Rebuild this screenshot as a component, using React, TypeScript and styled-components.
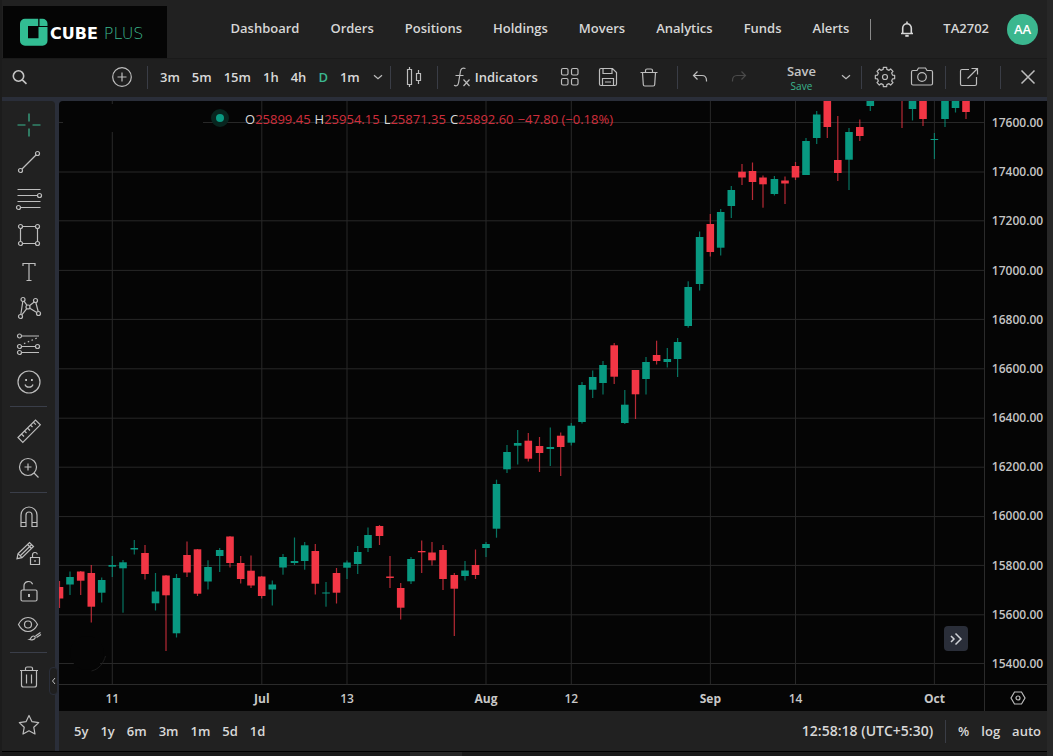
import React from "react";
import styled, { createGlobalStyle } from "styled-components";

const GlobalStyle = createGlobalStyle`
  *, *::before, *::after { box-sizing: border-box; }
  body {
    margin: 0;
    background: #1b1b1b;
    color: #d8d8d8;
    font-family: "Open Sans", "Noto Sans", sans-serif;
    font-size: 13px;
  }
  button { font: inherit; color: inherit; background: none; border: 0; padding: 0; margin: 0; cursor: pointer; }
  a { color: inherit; text-decoration: none; }
`;

const GREEN = "#089981";
const RED = "#f23645";
const ACCENT = "#3bb78f";
const SLATE = "#2a2e39";
const PANEL = "#212121";
const BLACK = "#050505";

const Page = styled.div`
  display: flex;
  flex-direction: column;
  min-height: 100vh;
  border-left: 2px solid #1c1c1c;
  border-right: 6px solid #272727;
`;

/* ---------- header ---------- */

const Header = styled.header`
  display: flex;
  align-items: center;
  height: 59px;
  padding: 0 9px 0 1px;
  background: ${PANEL};
  border-bottom: 1px solid #1a1a1a;
`;

const Logo = styled.a`
  display: flex;
  align-items: center;
  align-self: flex-end;
  gap: 2px;
  width: 164px;
  height: 52px;
  padding-left: 17px;
  background: ${BLACK};
`;

const Wordmark = styled.span`
  display: flex;
  gap: 6px;
  padding-top: 3px;
  color: #ffffff;
  font: 700 16px/20px "DejaVu Sans", sans-serif;
`;

const WordmarkLight = styled.span`
  color: ${ACCENT};
  font-weight: 200;
`;

const Nav = styled.nav`
  display: flex;
  gap: 31px;
  margin-left: auto;
  margin-right: 21px;
`;

const NavLink = styled.a`
  font-weight: 600;
  font-size: 13px;
  line-height: 18px;
  padding-bottom: 2px;
  color: #d6d6d6;
`;

const HeaderRule = styled.span`
  width: 1px;
  height: 21px;
  background: #8a8a8a;
`;

const BellButton = styled.button`
  display: flex;
  margin: 0 27px 0 27px;
`;

const Avatar = styled.button`
  width: 31px;
  height: 31px;
  margin-left: 18px;
  border-radius: 50%;
  background: ${ACCENT};
  color: #ffffff;
  font-weight: 600;
  line-height: 31px;
`;

/* ---------- chart toolbar ---------- */

const Toolbar = styled.div`
  display: flex;
  align-items: center;
  height: 38px;
  padding: 0 5px 2px 0;
  color: #c4c4c4;
  background: #1f1f1f;
`;

const SearchButton = styled.button`
  display: flex;
  width: 106px;
  padding-left: 9px;
`;

const IconButton = styled.button<{ $width?: number; $left?: number; $dim?: boolean }>`
  display: flex;
  justify-content: center;
  align-items: center;
  flex: none;
  width: ${(p) => p.$width ?? 28}px;
  height: 28px;
  margin-left: ${(p) => p.$left ?? 0}px;
  color: ${(p) => (p.$dim ? "#4a4a4a" : "#bdbdbd")};
`;

const Divider = styled.span<{ $before?: number; $after?: number }>`
  flex: none;
  width: 1px;
  height: 23px;
  margin: 0 ${(p) => p.$after ?? 9}px 0 ${(p) => p.$before ?? 9}px;
  background: #3a3d46;
`;

const TextGroup = styled.div`
  display: flex;
  align-items: center;
  gap: 12px;
`;

const TextButton = styled.button<{ $active?: boolean; $large?: boolean }>`
  font-weight: 600;
  font-size: ${(p) => (p.$large ? 14 : 13)}px;
  line-height: 20px;
  color: ${(p) => (p.$active ? ACCENT : "#d8d8d8")};
`;

const SaveButton = styled.button`
  display: flex;
  flex-direction: column;
  align-items: center;
  margin-left: auto;
  margin-right: 24px;
  font-weight: 600;
  line-height: 18px;
`;

const SaveHint = styled.small`
  color: ${ACCENT};
  font-size: 10px;
  font-weight: 400;
  line-height: 12px;
`;

/* ---------- workspace ---------- */

const Workspace = styled.main`
  display: flex;
  flex: 1;
  gap: 4px;
  padding-top: 4px;
  background: ${SLATE};
`;

const Sidebar = styled.aside`
  position: relative;
  display: flex;
  flex-direction: column;
  align-items: center;
  width: 53px;
  padding: 6px 0 8px;
  color: #bdbdbd;
  background: ${PANEL};
  border-top-right-radius: 4px;
`;

const ToolGroup = styled.div<{ $height: number }>`
  display: grid;
  grid-auto-rows: 1fr;
  height: ${(p) => p.$height}px;
`;

const ToolButton = styled.button<{ $active?: boolean }>`
  display: flex;
  align-items: center;
  justify-content: center;
  width: 36px;
  min-height: 36px;
  color: ${(p) => (p.$active ? ACCENT : "inherit")};
`;

const ToolRule = styled.hr`
  width: 37px;
  height: 1px;
  margin: 6px 0;
  border: 0;
  background: #3a3e49;
`;

const Favorites = styled.div`
  margin-top: auto;
`;

const CollapseHandle = styled.button`
  position: absolute;
  right: -3px;
  bottom: 56px;
  display: flex;
  align-items: center;
  justify-content: center;
  width: 9px;
  height: 28px;
  background: #1f1f1f;
  border: 1px solid ${SLATE};
  border-radius: 4px;
`;

const ChartColumn = styled.section`
  display: flex;
  flex-direction: column;
  flex: 1;
  min-width: 0;
`;

const ChartGrid = styled.div`
  display: grid;
  grid-template-columns: minmax(0, 1fr) 63px;
  grid-template-rows: minmax(583px, 1fr) 27px;
  flex: 1;
  background: ${BLACK};
  border-top-left-radius: 4px;
`;

const Plot = styled.div`
  position: relative;
`;

const PlotSvg = styled.svg`
  display: block;
  width: 100%;
  height: 100%;
`;

const Legend = styled.div`
  position: absolute;
  top: 6px;
  left: 152px;
  display: flex;
  align-items: center;
  gap: 4px;
  color: ${RED};
  font-size: 13px;
  line-height: 24px;
`;

const LegendLabel = styled.span`
  color: #d8d8d8;
`;

const LegendValue = styled.span`
  opacity: 0.85;
`;

const StatusDot = styled.span`
  width: 18px;
  height: 18px;
  margin: 0 12px 3px 0;
  border: 5px solid #08251f;
  border-radius: 50%;
  background: #0a9a82;
`;

const ScrollButton = styled.button`
  position: absolute;
  right: 16px;
  bottom: 33px;
  display: flex;
  align-items: center;
  justify-content: center;
  width: 24px;
  height: 25px;
  color: #cfd1d6;
  background: ${SLATE};
  border-radius: 4px;
`;

const PriceAxis = styled.div`
  display: flex;
  flex-direction: column;
  justify-content: space-between;
  align-items: center;
  padding: 14px 0 12px 3px;
  border-left: 1px solid #2b2b2b;
  color: #c4c4c4;
  font-size: 12px;
  font-weight: 600;
  line-height: 16px;
`;

const TimeAxis = styled.div`
  border-top: 1px solid #2b2b2b;
`;

const TimeSvg = styled.svg`
  display: block;
  width: 100%;
  height: 26px;
  fill: #c8c8c8;
  font-size: 12px;
`;

const TimeLabel = styled.text<{ $major: boolean }>`
  font-weight: ${(p) => (p.$major ? 700 : 600)};
`;

const AxisSettings = styled.button`
  display: flex;
  align-items: center;
  justify-content: center;
  padding-left: 4px;
  border-top: 1px solid #2b2b2b;
  border-left: 1px solid #2b2b2b;
  color: #bdbdbd;
`;

const Footer = styled.footer`
  display: flex;
  align-items: center;
  justify-content: space-between;
  height: 40px;
  padding: 0 6px 0 15px;
  background: ${PANEL};
`;

const BottomEdge = styled.div`
  height: 5px;
  border-top: 1px solid #000000;
  background: linear-gradient(90deg, #1a1a1a 39%, #262626 39%, #262626 44%, #1a1a1a 44%);
`;

/* ---------- icons ---------- */

type IconProps = { children: React.ReactNode; size?: number; box?: number; weight?: number };

function Icon({ children, size = 28, box = 28, weight = 1.2 }: IconProps) {
  return (
    <svg
      width={size}
      height={size}
      viewBox={`0 0 ${box} ${box}`}
      fill="none"
      stroke="currentColor"
      strokeWidth={weight}
      aria-hidden="true"
    >
      {children}
    </svg>
  );
}

const Chevron = () => (
  <Icon size={12} box={12}><path d="M2 4.2l4 3.6 4-3.6" /></Icon>
);

const icons = {
  cross: <path d="M14 2.5v8M14 17.5v8M2.5 14h8M17.5 14h8" />,
  trend: <><circle cx="5.5" cy="22.5" r="2" /><circle cx="22.5" cy="5.5" r="2" /><path d="M7 21L21 7" /></>,
  fib: <><path d="M2.5 4.5h23M2.5 10.5h20M2.5 16.5h23M5.5 22.5h20" /><circle cx="24.5" cy="10.5" r="2" /><circle cx="3.5" cy="22.5" r="2" /></>,
  rect: (
    <><circle cx="5.5" cy="5.5" r="2" /><circle cx="22.5" cy="5.5" r="2" /><circle cx="5.5" cy="22.5" r="2" /><circle cx="22.5" cy="22.5" r="2" />
      <path d="M7.5 5.5h13M7.5 22.5h13M5.5 7.5v13M22.5 7.5v13" /></>
  ),
  text: <path d="M8 8V5.5h12V8M14 5.5v17M11.5 22.5h5" />,
  pattern: (
    <><circle cx="8" cy="5.5" r="2" /><circle cx="20.5" cy="6.5" r="2" /><circle cx="13" cy="13" r="2" /><circle cx="5.5" cy="22.5" r="2" /><circle cx="23.5" cy="19.5" r="2" />
      <path d="M7.8 7.5L5.8 20.5M9 7.2l3 4.1M19.2 8l-4.8 3.7M20.8 8.5l2.4 9M14.8 14.2l7 4.2M11.8 14.6l-5 6.2" /></>
  ),
  position: (
    <><circle cx="4.5" cy="5" r="2" /><circle cx="4.5" cy="15.5" r="2" /><circle cx="22.5" cy="15.5" r="2" /><circle cx="4.5" cy="21.5" r="2" />
      <path d="M6.5 5H24M6.5 15.5h14M6.5 21.5H24" /><path d="M9 12.6l14-6" strokeDasharray="1.5 2.6" /></>
  ),
  smile: (
    <><circle cx="14" cy="14" r="11" /><path d="M10 16.500c.5 1.800 2 2.700 4 2.700s3.500-.9 4-2.700" /><path d="M10.200 12h1.800M16 12h1.800" strokeWidth="1.800" /></>
  ),
  ruler: <path d="M3 20.500L20.500 3l4.800 4.800L7.800 25.300zM6.500 17l2.500 2.500M9.500 14l2 2M12.500 11l2.500 2.500M15.500 8l2 2M18.300 5.200l2.500 2.500" />,
  zoom: <><circle cx="13" cy="13" r="8.500" /><path d="M19 19l4.500 4.500M13 9.500v7M9.500 13h7" /></>,
  magnet: <path d="M6 23.500v-11.500a8 8 0 0 1 16 0v11.500h-5v-11.500a3 3 0 0 0-6 0v11.500zM6 19.500h5M17 19.500h5" />,
  pencilLock: (
    <><path d="M3 13.700L14.500 2.500l4 4L7 17.700l-5 1zM3 13.700l4 4M5.500 15.500L16.500 4.700M12.500 4.500l4 4" /><path d="M15.500 17.500h9v7h-9zM17.500 17.500v-2.500a2.500 2.500 0 0 1 4.900-.7M20 20v2" /></>
  ),
  lock: <><rect x="6" y="13" width="16" height="11" rx="1.500" /><path d="M9 13v-4a4.500 4.500 0 0 1 8.600-1.800" /><path d="M14 17v3" strokeWidth="2" /></>,
  eye: (
    <><path d="M3.500 10.500c2.200-4.500 5.500-7 9.500-7s7.300 2.500 9.500 7c-2.200 4.500-5.500 7-9.500 7s-7.300-2.500-9.500-7z" /><circle cx="13" cy="10.500" r="3.500" />
      <path d="M14.500 25.500c1.200-.2 1.500-3.500 4-3.500 1.200 0 2 1 1.600 2-.6 1.600-3.400 2.300-5.600 1.500zM20.500 22l5-3.500M21.500 23.500l4.500-3" /></>
  ),
  trash: <path d="M5 7.500h18M10.500 7.500v-2a1.500 1.500 0 0 1 1.500-1.500h4a1.500 1.500 0 0 1 1.500 1.500v2M6.500 7.500v14.500a2 2 0 0 0 2 2h11a2 2 0 0 0 2-2v-14.500M11.500 11.500v9M16.500 11.500v9" />,
  star: <path d="M14 4.500l3 6.200 6.700.9-4.900 4.700 1.200 6.700-6-3.200-6 3.200 1.200-6.700-4.900-4.700 6.700-.9z" strokeLinejoin="round" />,
};

type ToolName = keyof typeof icons;

const Tool = ({ name, label, active }: { name: ToolName; label: string; active?: boolean }) => (
  <ToolButton type="button" aria-label={label} $active={active}>
    <Icon>{icons[name]}</Icon>
  </ToolButton>
);

/* eight-toothed gear outline */
const gearPath = (() => {
  const points: string[] = [];
  for (let i = 0; i < 8; i++) {
    [[-0.24, 7.8], [-0.17, 9.8], [0.17, 9.8], [0.24, 7.8]].forEach(([da, r]) => {
      const a = (i * Math.PI) / 4 + da;
      points.push(`${(14 + r * Math.sin(a)).toFixed(2)} ${(14 - r * Math.cos(a)).toFixed(2)}`);
    });
  }
  return `M${points.join("L")}Z`;
})();

/* ---------- data ---------- */

const navItems = ["Dashboard", "Orders", "Positions", "Holdings", "Movers", "Analytics", "Funds", "Alerts"];
const intervals = ["3m", "5m", "15m", "1h", "4h", "D", "1m"];
const ranges = ["5y", "1y", "6m", "3m", "1m", "5d", "1d"];
const prices = Array.from({ length: 12 }, (_, i) => (17600 - i * 200).toFixed(2));
const priceLines = [122.5, 172, 220.8, 270.4, 319.4, 368.8, 418.2, 467.2, 516.6, 565.4, 614.8, 663.5];
const timeTicks: [number, string][] = [
  [112.3, "11"], [261.8, "Jul"], [347, "13"], [486, "Aug"], [571.3, "12"], [710.4, "Sep"], [795.5, "14"], [934.4, "Oct"],
];
const ohlc: [string, string][] = [["O", "25899.45"], ["H", "25954.15"], ["L", "25871.35"], ["C", "25892.60"]];

/* x, high, body top, body bottom, low, rising */
const candles: [number, number, number, number, number, 0 | 1][] = [
  [59.5, 581, 587, 598.5, 608, 0], [70, 571.5, 577, 584.5, 595, 1], [80.7, 571, 571.5, 580.7, 595, 0],
  [91.3, 565, 573, 606.7, 622.5, 0], [101.7, 577.5, 580, 592.7, 602.5, 1], [112.3, 556, 565, 566.7, 577, 1],
  [123, 560, 562.3, 568.3, 612.7, 1], [134.3, 540, 548, 549.5, 554.5, 1], [145, 545, 553, 574, 579.5, 0],
  [155.5, 573, 591.5, 603.3, 610.5, 1], [166, 575, 575.5, 595.3, 651, 0], [176.5, 574, 578, 633.3, 637.5, 1],
  [187, 541.5, 555, 572.5, 577, 0], [197.5, 549, 549.3, 593.7, 596, 0], [208, 560.3, 567, 581.5, 589.5, 1],
  [219.7, 548, 550, 556, 572, 1], [230, 536, 536.5, 563, 567.5, 0], [240.7, 556, 563, 579, 583.5, 0],
  [251, 555.5, 570.7, 585.5, 588, 0], [261.7, 576, 576.5, 596, 598.5, 0], [272.3, 580.5, 584.5, 589.5, 605.5, 1],
  [283, 554, 557, 567.5, 574.7, 1], [294.5, 537.5, 561, 563, 565, 1], [304.7, 542, 545.3, 561, 569.7, 1],
  [315.3, 544, 551, 583.7, 594.5, 0], [326, 582, 592.5, 593.5, 606.7, 1], [336.5, 568, 573, 592.7, 603.5, 0],
  [347, 560.5, 562.5, 567.7, 579, 1], [357.7, 546, 552, 564, 574, 1], [368, 527.5, 535, 548, 552, 1],
  [379.5, 525, 526, 536, 545, 0], [390, 556, 576.5, 578, 588, 0], [400.7, 583, 588, 607.7, 619.5, 0],
  [411, 557, 559, 581.3, 584, 1], [421.7, 540.5, 551, 552.3, 573, 0], [432, 542, 552.5, 560.3, 565.5, 0],
  [443, 545, 550, 579, 590, 0], [454.3, 573, 575, 588.7, 636, 0], [465, 561, 570.5, 576, 580.5, 1],
  [475.5, 549.5, 565, 575, 579, 0], [486, 542, 544, 548, 557, 1], [496.5, 479.7, 484, 528.7, 537.7, 1],
  [507, 445, 452, 469.3, 473, 1], [517.7, 430, 443, 445.7, 464.5, 1], [528.3, 433, 440.7, 458.7, 461.5, 0],
  [539.5, 437, 446, 453, 472, 0], [550.3, 427.5, 447, 449, 466, 1], [560.7, 432.5, 435.7, 447, 476, 0],
  [571.3, 423, 425.7, 442.7, 445.5, 1], [582, 382, 385, 422, 423.5, 1], [592.7, 370.5, 377, 389.7, 398, 1],
  [603, 361, 365, 383, 394.5, 1], [614.2, 343, 345.3, 376.7, 384, 0], [624.8, 390, 404.7, 423, 424, 1],
  [635.5, 370, 370, 394.3, 419, 0], [646, 357, 362, 379, 394.5, 1], [656.6, 340.7, 355, 361, 364.5, 0],
  [667.3, 348, 359, 362, 367.5, 1], [677.6, 338, 342, 359, 377, 1], [688.2, 281.3, 287, 326, 327.7, 1],
  [699.6, 231.5, 237, 284, 290.5, 1], [710.3, 214, 224, 252, 256.5, 0], [720.7, 209, 212, 247.7, 255.5, 1],
  [731.3, 186, 190, 206, 218, 1], [742, 164, 171.7, 177.5, 185, 0], [752.5, 162.5, 171, 182, 200, 0],
  [763, 175.5, 177.5, 184.3, 207.7, 0], [774.4, 176, 179, 194, 195.5, 1], [785, 176.5, 180.5, 183.5, 204, 0],
  [795.5, 162, 166, 177.5, 180, 0], [806, 138, 141, 175, 175, 1], [816.7, 111, 114.5, 138, 144, 1],
  [827.3, 100, 100, 127, 138, 0], [837.8, 116, 160, 173, 181, 0], [849, 128, 132, 159.7, 190, 1],
  [859.8, 119.5, 127, 136, 141, 0], [870.3, 100, 100, 106, 111, 1], [902, 90, 90, 90, 128, 0],
  [912.5, 100, 100, 109, 120.5, 1], [923, 100, 100, 119, 126, 0], [934.4, 133, 139, 140, 159, 1],
  [945, 100, 100, 119, 127, 1], [955.5, 100, 100, 108, 112.5, 1], [966, 100, 100, 112, 119, 0],
];

function CandleChart() {
  return (
    <PlotSvg viewBox="59 101 925 583" preserveAspectRatio="none" role="img" aria-label="Daily candlestick chart">
      <g stroke="#282828" strokeWidth="1">
        {priceLines.map((y) => <path key={y} d={`M59 ${y}H984`} />)}
        {timeTicks.map(([x]) => <path key={x} d={`M${x} 101V684`} />)}
      </g>
      <path d="M63 104h140v28h-140z" fill={BLACK} />
      <circle cx="87" cy="653" r="17" fill={BLACK} />
      <path d="M105.500 656c-2 7-6 13-14 15" fill="none" stroke="#1c1c1c" />
      {candles.map(([x, high, top, bottom, low, rising]) => (
        <g key={x} fill={rising ? GREEN : RED}>
          <rect x={x - 0.6} y={high} width="1.200" height={low - high} opacity="0.750" />
          <rect x={x - 3.8} y={top} width="7.600" height={Math.max(bottom - top, 0)} />
        </g>
      ))}
    </PlotSvg>
  );
}

/* ---------- app ---------- */

export default function App() {
  return (
    <Page>
      <GlobalStyle />
      <Header>
        <Logo href="#" aria-label="Cube Plus">
          <svg width="28" height="28" viewBox="0 0 28 28" aria-hidden="true">
            <path fill="#32bd93" fillRule="evenodd" d="M5 .7h13.200v7.300h-10.200v12.300h10.500v-11.300h9v13.700a5 5 0 0 1-5 5h-17.500a5 5 0 0 1-5-5v-17a5 5 0 0 1 5-5z" />
            <path fill="#32bd93" d="M19.500.7h3a5 5 0 0 1 5 5v2.300h-8z" />
          </svg>
          <Wordmark>CUBE<WordmarkLight>PLUS</WordmarkLight></Wordmark>
        </Logo>
        <Nav>
          {navItems.map((item) => <NavLink key={item} href="#">{item}</NavLink>)}
        </Nav>
        <HeaderRule />
        <BellButton type="button" aria-label="Notifications">
          <Icon size={18} box={18} weight={1.6}>
            <path d="M3 13.500h12M4.700 13.500v-5.500a4.300 4.300 0 0 1 8.600 0v5.500M9 1.500v2" />
            <path d="M7.300 15.800h3.400" strokeWidth="2" />
          </Icon>
        </BellButton>
        <NavLink href="#">TA2702</NavLink>
        <Avatar type="button">AA</Avatar>
      </Header>

      <Toolbar>
        <SearchButton type="button" aria-label="Symbol search">
          <Icon size={18} box={18} weight={1.6}><circle cx="7.500" cy="8" r="5.200" /><path d="M11.300 11.800l4.200 4" /></Icon>
        </SearchButton>
        <IconButton type="button" aria-label="Compare symbol">
          <Icon><circle cx="14" cy="14" r="9.300" /><path d="M14 9.500v9M9.500 14h9" /></Icon>
        </IconButton>
        <Divider $before={11} $after={12} />
        <TextGroup>
          {intervals.map((item) => (
            <TextButton key={item} type="button" $active={item === "D"}>{item}</TextButton>
          ))}
          <IconButton type="button" aria-label="More intervals" $width={12}><Chevron /></IconButton>
        </TextGroup>
        <Divider $before={6} $after={9} />
        <IconButton type="button" aria-label="Chart style">
          <Icon><path d="M7.500 6.500h4v15h-4zM9.500 4v2.500M9.500 21.500v2.500M16.500 10.500h4v7h-4zM18.500 7v3.500M18.500 17.500v3.500" /></Icon>
        </IconButton>
        <Divider $before={9} $after={9} />
        <IconButton type="button" aria-label="Functions">
          <Icon><path d="M18.500 5.500c-3-1.200-4.600 0-5.100 3l-1.800 11c-.5 3-2 4-4.600 2.800M8.500 12.500h8M16.500 16.500l6 6.500M22.500 16.500l-6 6.500" /></Icon>
        </IconButton>
        <TextButton type="button">Indicators</TextButton>
        <IconButton type="button" aria-label="Templates" $left={18}>
          <Icon>
            <rect x="5.500" y="5.500" width="6.500" height="6.500" rx="1.500" /><rect x="15.500" y="5.500" width="6.500" height="6.500" rx="1.500" />
            <rect x="5.500" y="15.500" width="6.500" height="6.500" rx="1.500" /><rect x="15.500" y="15.500" width="6.500" height="6.500" rx="1.500" />
          </Icon>
        </IconButton>
        <IconButton type="button" aria-label="Save template" $left={10}>
          <Icon><path d="M5.500 7a1.500 1.500 0 0 1 1.500-1.500h11.500l4 4v11.500a1.500 1.500 0 0 1-1.500 1.500h-14a1.500 1.500 0 0 1-1.500-1.500zM9 5.500v5h9v-5M8.500 22.500v-7h11v7M11 19h6" /></Icon>
        </IconButton>
        <IconButton type="button" aria-label="Delete" $left={13}>
          <Icon><path d="M5.500 9.500h17M10.500 9.500v-2a1.500 1.500 0 0 1 1.500-1.500h4a1.500 1.500 0 0 1 1.500 1.500v2M7.500 9.500l.8 12a1.500 1.500 0 0 0 1.500 1.500h8.400a1.500 1.500 0 0 0 1.500-1.500l.8-12" /></Icon>
        </IconButton>
        <Divider $before={14} $after={8} />
        <IconButton type="button" aria-label="Undo">
          <Icon><path d="M11.500 8.500l-4 4 4 4M7.500 12.500h8.500c3 0 4.500 2 4.500 5v1" /></Icon>
        </IconButton>
        <IconButton type="button" aria-label="Redo" $left={11} $dim>
          <Icon><path d="M16.500 8.500l4 4-4 4M20.500 12.500h-8.500c-3 0-4.500 2-4.500 5v1" /></Icon>
        </IconButton>
        <SaveButton type="button">Save<SaveHint>Save</SaveHint></SaveButton>
        <IconButton type="button" aria-label="Save options" $width={12}><Chevron /></IconButton>
        <Divider />
        <IconButton type="button" aria-label="Settings">
          <Icon><path d={gearPath} strokeLinejoin="round" /><circle cx="14" cy="14" r="2.500" /></Icon>
        </IconButton>
        <IconButton type="button" aria-label="Snapshot" $left={9}>
          <Icon><path d="M5 7.500h4l1.500-2.500h7l1.500 2.500h4a1.500 1.500 0 0 1 1.500 1.500v11.500a1.500 1.500 0 0 1-1.500 1.500h-18a1.500 1.500 0 0 1-1.500-1.500v-11.500a1.500 1.500 0 0 1 1.500-1.500z" /><circle cx="14" cy="14" r="4.300" /></Icon>
        </IconButton>
        <Divider />
        <IconButton type="button" aria-label="Open in new window">
          <Icon><path d="M14 6.500h-7a1.500 1.500 0 0 0-1.500 1.500v13a1.500 1.500 0 0 0 1.500 1.500h13a1.500 1.500 0 0 0 1.500-1.500v-7M12.500 15.500l9.500-9.500M16.500 5.500h6v6" /></Icon>
        </IconButton>
        <Divider $before={17} $after={13} />
        <IconButton type="button" aria-label="Close">
          <Icon weight={1.5}><path d="M7.500 7.500l13 13M20.500 7.500l-13 13" /></Icon>
        </IconButton>
      </Toolbar>

      <Workspace>
        <Sidebar>
          <ToolGroup $height={293}>
            <Tool name="cross" label="Cursor" active />
            <Tool name="trend" label="Trend line" />
            <Tool name="fib" label="Fib retracement" />
            <Tool name="rect" label="Rectangle" />
            <Tool name="text" label="Text" />
            <Tool name="pattern" label="Patterns" />
            <Tool name="position" label="Position" />
            <Tool name="smile" label="Icons" />
          </ToolGroup>
          <ToolRule />
          <ToolGroup $height={73}>
            <Tool name="ruler" label="Measure" />
            <Tool name="zoom" label="Zoom in" />
          </ToolGroup>
          <ToolRule />
          <ToolGroup $height={147}>
            <Tool name="magnet" label="Magnet mode" />
            <Tool name="pencilLock" label="Stay in drawing mode" />
            <Tool name="lock" label="Lock drawings" />
            <Tool name="eye" label="Hide drawings" />
          </ToolGroup>
          <ToolRule />
          <Tool name="trash" label="Remove drawings" />
          <Favorites><Tool name="star" label="Favorites" /></Favorites>
          <CollapseHandle type="button" aria-label="Collapse panel">
            <svg width="5" height="8" viewBox="0 0 5 8" fill="none" stroke="#bdbdbd" aria-hidden="true"><path d="M4 1L1.500 4 4 7" /></svg>
          </CollapseHandle>
        </Sidebar>

        <ChartColumn>
          <ChartGrid>
            <Plot>
              <CandleChart />
              <Legend>
                <StatusDot />
                {ohlc.map(([label, value]) => (
                  <span key={label}><LegendLabel>{label}</LegendLabel><LegendValue>{value}</LegendValue></span>
                ))}
                <LegendValue>−47.80 (−0.18%)</LegendValue>
              </Legend>
              <ScrollButton type="button" aria-label="Scroll to latest bar">
                <Icon size={14} box={14} weight={1.5}><path d="M2 4l3 3-3 3M6.500 1.500L12 7l-5.500 5.500" /></Icon>
              </ScrollButton>
            </Plot>
            <PriceAxis>{prices.map((price) => <span key={price}>{price}</span>)}</PriceAxis>
            <TimeAxis>
              <TimeSvg aria-label="Time axis">
                {timeTicks.map(([x, label]) => (
                  <TimeLabel key={label} $major={label.length > 2} x={`${((x - 59) / 925) * 100}%`} y="18" textAnchor="middle">
                    {label}
                  </TimeLabel>
                ))}
              </TimeSvg>
            </TimeAxis>
            <AxisSettings type="button" aria-label="Axis settings">
              <Icon size={18} box={18}><path d="M5.500 3h7l3.500 6-3.500 6h-7L2 9z" /><circle cx="9" cy="9" r="2" /></Icon>
            </AxisSettings>
          </ChartGrid>
          <Footer>
            <TextGroup>
              {ranges.map((item) => <TextButton key={item} type="button">{item}</TextButton>)}
            </TextGroup>
            <TextGroup>
              <TextButton type="button" $large>12:58:18 (UTC+5:30)</TextButton>
              <Divider $before={0} $after={0} />
              <TextButton type="button">%</TextButton>
              <TextButton type="button">log</TextButton>
              <TextButton type="button">auto</TextButton>
            </TextGroup>
          </Footer>
        </ChartColumn>
      </Workspace>
      <BottomEdge />
    </Page>
  );
}
